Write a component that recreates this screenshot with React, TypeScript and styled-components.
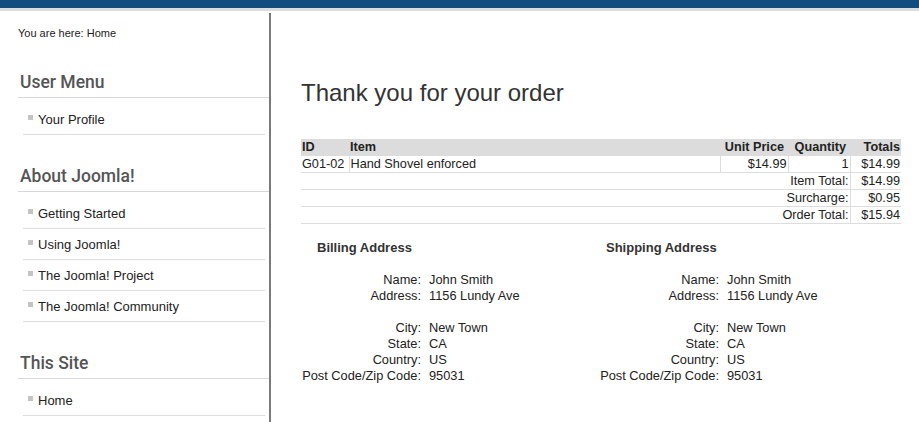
import React from 'react';
import styled, { createGlobalStyle } from 'styled-components';

const GlobalStyle = createGlobalStyle`
  body {
    margin: 0;
    background: #fff;
    font-family: "Liberation Sans", Arial, sans-serif;
    color: #222;
  }
`

const TopBar = styled.div`
  height: 8px;
  background: #134d80;
  border-bottom: 3px solid #dcdcdc;
`

const Page = styled.div`
  display: flex;
  margin-top: 2px;
`

const Sidebar = styled.div`
  width: 252px;
  padding-left: 18px;
  border-right: 2px solid #7a7a7a;
  min-height: 420px;
`

const Breadcrumb = styled.div`
  font-size: 11px;
  color: #222;
  padding-top: 14px;
  height: 13px;
  line-height: 13px;
`

const Module = styled.div<{ first?: boolean }>`
  margin-top: ${p => (p.first ? '27px' : '26px')};
`

const ModuleTitle = styled.h3`
  margin: 0;
  font-family: Roboto, "Noto Sans", sans-serif;
  font-weight: 500;
  font-size: 17.5px;
  color: #555;
  height: 30px;
  line-height: 30px;
  padding-left: 2px;
  border-bottom: 1px solid #d8d8d8;
`

const Menu = styled.ul`
  list-style: none;
  margin: 0;
  padding: 6px 4px 0 5px;
`

const MenuItem = styled.li`
  height: 30px;
  border-bottom: 1px solid #dedede;
  font-size: 13px;
  color: #222;
  display: flex;
  align-items: center;

  &::before {
    content: '';
    width: 5px;
    height: 5px;
    background: #c4c4c4;
    margin: 0 5px 3px 5px;
  }
`

const Main = styled.div`
  flex: 1;
  padding: 62px 18px 0 30px;
`

const Title = styled.h1`
  margin: 0 0 28px;
  font-family: "Liberation Sans", Arial, sans-serif;
  font-weight: normal;
  font-size: 24px;
  color: #333;
  line-height: 36px;
`

const OrderTable = styled.table`
  width: 600px;
  border-collapse: collapse;
  font-size: 12.7px;
  color: #222;
`

const HeadCell = styled.th<{ align?: string; padRight?: number }>`
  background: #dcdcdc;
  text-align: ${p => p.align || 'left'};
  font-weight: bold;
  padding: 0 ${p => p.padRight ?? 1}px 0 1px;
  height: 17px;
  line-height: 17px;
`

const Cell = styled.td<{ align?: string; divider?: boolean }>`
  text-align: ${p => p.align || 'left'};
  padding: 0 1px;
  height: 16px;
  line-height: 16px;
  border-bottom: 1px solid #ddd;
  border-left: ${p => (p.divider ? '1px solid #ddd' : 'none')};
`

const Addresses = styled.div`
  display: flex;
  margin-top: 16px;
  font-size: 12.8px;
  color: #222;
`

const AddressBlock = styled.div`
  width: 298px;
`

const AddressTitle = styled.div<{ indent: number }>`
  font-weight: bold;
  font-size: 13px;
  color: #333;
  padding-left: ${p => p.indent}px;
  height: 16px;
  line-height: 16px;
  margin-bottom: 16px;
`

const Rows = styled.div`
  display: grid;
  grid-template-columns: 120px 1fr;
  column-gap: 8px;
  line-height: 16px;
`

const Label = styled.div`
  text-align: right;
  white-space: nowrap;
`

const Spacer = styled.div`
  grid-column: 1 / 3;
  height: 16px;
`

type Addr = { name: string; address: string; city: string; state: string; country: string; zip: string }

const addr: Addr = {
  name: 'John Smith',
  address: '1156 Lundy Ave',
  city: 'New Town',
  state: 'CA',
  country: 'US',
  zip: '95031',
}

const Address = ({ title, data, indent }: { title: string; data: Addr; indent: number }) => (
  <AddressBlock>
    <AddressTitle indent={indent}>{title}</AddressTitle>
    <Rows>
      <Label>Name:</Label><div>{data.name}</div>
      <Label>Address:</Label><div>{data.address}</div>
      <Spacer />
      <Label>City:</Label><div>{data.city}</div>
      <Label>State:</Label><div>{data.state}</div>
      <Label>Country:</Label><div>{data.country}</div>
      <Label>Post Code/Zip Code:</Label><div>{data.zip}</div>
    </Rows>
  </AddressBlock>
)

const menus = [
  { title: 'User Menu', items: ['Your Profile'] },
  { title: 'About Joomla!', items: ['Getting Started', 'Using Joomla!', 'The Joomla! Project', 'The Joomla! Community'] },
  { title: 'This Site', items: ['Home'] },
]

const App: React.FC = () => {
  return (
    <>
      <GlobalStyle />
      <TopBar />
      <Page>
        <Sidebar>
          <Breadcrumb>You are here: Home</Breadcrumb>
          {menus.map((m, idx) => (
            <Module key={m.title} first={idx === 0}>
              <ModuleTitle>{m.title}</ModuleTitle>
              <Menu>
                {m.items.map(i => <MenuItem key={i}>{i}</MenuItem>)}
              </Menu>
            </Module>
          ))}
        </Sidebar>
        <Main>
          <Title>Thank you for your order</Title>
          <OrderTable>
            <colgroup>
              <col style={{ width: 48 }} />
              <col />
              <col style={{ width: 68 }} />
              <col style={{ width: 62 }} />
              <col style={{ width: 51 }} />
            </colgroup>
            <thead>
              <tr>
                <HeadCell>ID</HeadCell>
                <HeadCell>Item</HeadCell>
                <HeadCell align="right" padRight={4}>Unit Price</HeadCell>
                <HeadCell align="right" padRight={4}>Quantity</HeadCell>
                <HeadCell align="right">Totals</HeadCell>
              </tr>
            </thead>
            <tbody>
              <tr>
                <Cell>G01-02</Cell>
                <Cell divider>Hand Shovel enforced</Cell>
                <Cell divider align="right">$14.99</Cell>
                <Cell divider align="right">1</Cell>
                <Cell divider align="right">$14.99</Cell>
              </tr>
              <tr>
                <Cell colSpan={4} align="right">Item Total:</Cell>
                <Cell divider align="right">$14.99</Cell>
              </tr>
              <tr>
                <Cell colSpan={4} align="right">Surcharge:</Cell>
                <Cell divider align="right">$0.95</Cell>
              </tr>
              <tr>
                <Cell colSpan={4} align="right">Order Total:</Cell>
                <Cell divider align="right">$15.94</Cell>
              </tr>
            </tbody>
          </OrderTable>
          <Addresses>
            <Address title="Billing Address" data={addr} indent={16} />
            <Address title="Shipping Address" data={addr} indent={7} />
          </Addresses>
        </Main>
      </Page>
    </>
  )
}

export default App;
